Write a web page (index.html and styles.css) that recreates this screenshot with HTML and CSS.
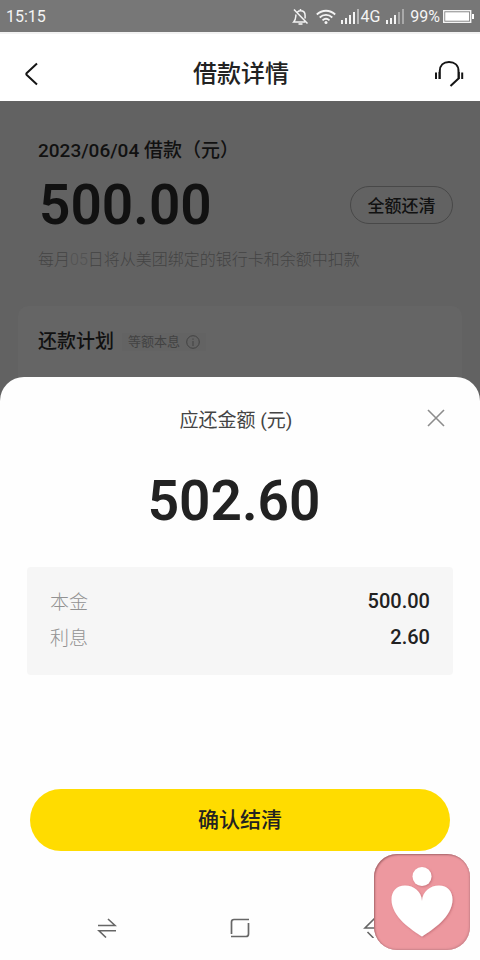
FILE: index.html
```html
<!DOCTYPE html>
<html lang="zh-CN">
<head>
<meta charset="utf-8">
<meta name="viewport" content="width=device-width, initial-scale=1">
<title>借款详情</title>
<link rel="stylesheet" href="styles.css">
</head>
<body>
<div class="status-bar">
  <span>15:15</span>
  <div class="status-icons">
    <svg width="18" height="20" viewBox="0 0 18 20" fill="none" stroke="#f4f4f4" stroke-width="1.5"><path d="M5.500 5C6.300 4.200 7.500 3.800 8.500 3.800c2.800 0 4.600 2 4.600 4.700v3M4 7.500c-.5 2.500.2 5-2.300 7.500h11.500M8.500 2v2M2 2.500l13.500 14"/><path d="M6.500 17h4" stroke-width="1.600"/></svg>
    <svg class="wifi" width="20" height="16" viewBox="0 0 20 16" fill="none" stroke="#f4f4f4" stroke-width="1.800"><path d="M.8 5.500c5.300-5 13.100-5 18.400 0M3.700 8.500c3.700-3.500 8.900-3.500 12.600 0M6.500 11.300c2.100-1.900 4.900-1.900 7 0"/><circle cx="10" cy="13.500" r="1.500" fill="#f4f4f4" stroke="none"/></svg>
    <svg class="signal" width="18" height="16" viewBox="0 0 18 16" fill="#f4f4f4"><path d="M0 11h2v4H0zM4 9h2v6H4zM8 6h2v9H8zM12 3h2v12h-2z"/><path d="M16 0h2v15h-2z" opacity=".5"/></svg>
    <span class="network">4G</span>
    <svg class="signal-second" width="18" height="16" viewBox="0 0 18 16" fill="#f4f4f4"><path d="M0 11h2v4H0zM4 9h2v6H4zM8 6h2v9H8z"/><path d="M12 3h2v12h-2zM16 0h2v15h-2z" opacity=".4"/></svg>
    <span>99%</span>
    <svg class="battery" width="31" height="13" viewBox="0 0 31 13"><rect x=".7" y=".7" width="27" height="11.600" fill="none" stroke="#f4f4f4" stroke-width="1.400"/><path d="M2.200 2.200h24v8.600h-24zM29 4h2v5h-2z" fill="#fff"/></svg>
  </div>
</div>

<header class="title-bar">
  <button class="icon-button" type="button" aria-label="返回"><svg width="14" height="24" viewBox="0 0 14 24" fill="none" stroke="#151515" stroke-width="2"><path d="M13 1.500 2.800 11q-1 1 0 2L13 22.500"/></svg></button>
  <h1>借款详情</h1>
  <button class="icon-button" type="button" aria-label="客服"><svg width="30" height="28" viewBox="0 0 30 28" fill="none" stroke="#151515" stroke-width="2"><path d="M5.800 19V11C5.800 5.500 9.300 2 15 2s9.500 3.500 9.500 9v7.500l-8 7.500M2 12.500V19M28.200 12.500V19"/><path d="M5.300 12v7M25 12v7" stroke-width="1.500"/></svg></button>
</header>

<main>
  <section class="loan">
    <h2>2023/06/04 借款（元）</h2>
    <div class="loan-row">
      <strong class="amount">500.00</strong>
      <button class="payoff" type="button">全额还清</button>
    </div>
    <p>每月<span class="day">05</span>日将从美团绑定的银行卡和余额中扣款</p>
    <div class="plan">
      <h2>还款计划</h2>
      <span class="tag">等额本息
        <svg width="14" height="14" viewBox="0 0 14 14" fill="none" stroke="#424242"><circle cx="7" cy="7" r="6.300"/><path d="M7 6v5M7 3.500v1.300"/></svg>
      </span>
    </div>
  </section>

  <section class="sheet">
    <div class="sheet-head">
      <h2>应还金额 (元)</h2>
      <button class="icon-button" type="button" aria-label="关闭"><svg width="18" height="18" viewBox="0 0 18 18" stroke="#8c8c8c" stroke-width="1.600"><path d="m1 1 16 16M17 1 1 17"/></svg></button>
    </div>
    <strong class="amount due">502.60</strong>
    <dl class="breakdown">
      <div><dt>本金</dt><dd>500.00</dd></div>
      <div><dt>利息</dt><dd>2.60</dd></div>
    </dl>
    <button class="confirm" type="button">确认结清</button>
    <nav class="system-nav">
      <button class="icon-button" type="button" aria-label="切换"><svg width="20" height="20" viewBox="0 0 20 20" fill="none" stroke="#666" stroke-width="1.600"><path d="M1 7.500h17L11 1M19 12.700H2L9 19.500"/></svg></button>
      <button class="icon-button" type="button" aria-label="主页"><svg width="20" height="20" viewBox="0 0 20 20" fill="none" stroke="#666" stroke-width="1.700"><path d="M1.500 16V4q0-2.500 2.500-2.500h15M1 18.500h15q2.500 0 2.500-2.500V5"/></svg></button>
      <button class="icon-button" type="button" aria-label="后退"><svg width="20" height="20" viewBox="0 0 20 20" fill="none" stroke="#666" stroke-width="1.600"><path d="M12 0 2 10h17M4.500 14l6 6"/></svg></button>
    </nav>
  </section>
</main>

<button class="floating" type="button" aria-label="爱心助手">
  <svg width="96" height="96" viewBox="0 0 96 96">
    <defs><filter id="soft" x="-20%" y="-20%" width="140%" height="140%"><feDropShadow dx="1" dy="1" stdDeviation="1.200" flood-color="#a64e58" flood-opacity=".5"/></filter></defs>
    <g fill="#fff" filter="url(#soft)"><circle cx="48" cy="22.500" r="9.500"/><path d="M48 82.500C38 76 17.500 63 17.500 45.500c0-8 5-14 13.500-14 9 0 16.500 6 17 15.500.5-9.500 8-15.500 17-15.500 8.500 0 13.500 6 13.500 14C78.500 63 58 76 48 82.500z"/></g>
  </svg>
</button>
</body>
</html>
```
FILE: styles.css
```css
* { box-sizing: border-box; }

body {
  position: relative;
  display: flex;
  flex-direction: column;
  min-height: 100vh;
  margin: 0;
  background: #fefefe;
  color: #222;
  font-family: Roboto, "Noto Sans CJK SC", sans-serif;
}

h1, h2, p, dl, dd { margin: 0; }
h1, h2 { font-weight: 500; }
svg { display: block; flex: none; }

button {
  padding: 0;
  border: 0;
  background: none;
  color: inherit;
  font: inherit;
}

.icon-button { display: grid; place-items: center; }

.status-bar {
  display: flex;
  align-items: center;
  justify-content: space-between;
  height: 32px;
  padding: 1px 6px 0;
  background: #777;
  color: #f4f4f4;
  font-size: 16px;
}

.status-icons { display: flex; align-items: center; }
.wifi { margin-left: 6px; }
.signal { margin-left: 5px; }
.network { margin-left: 1px; }
.signal-second { margin: 0 6px; }
.battery { margin-left: 3px; }

.title-bar {
  display: flex;
  align-items: center;
  justify-content: space-between;
  height: 69px;
  padding: 12px 16px 0 24px;
  border-top: 2px solid #f2f2f2;
  background: #fff;
}

.title-bar h1 {
  padding-left: 10px;
  font-size: 24px;
  line-height: 32px;
}

main {
  display: flex;
  flex: 1;
  flex-direction: column;
  background: #626262;
}

.loan { padding: 36px 18px 0; color: #111; }

.loan h2 {
  padding-left: 20px;
  font-size: 19px;
  line-height: 28px;
}

.loan-row {
  display: flex;
  align-items: center;
  justify-content: space-between;
  padding: 4px 9px 0 21px;
}

.amount {
  font-size: 55px;
  font-weight: 600;
  line-height: 72px;
}

.payoff {
  width: 103px;
  height: 38px;
  padding-bottom: 2px;
  border: 1px solid #484848;
  border-radius: 19px;
  font-size: 17px;
  font-weight: 500;
}

.loan p {
  padding: 7px 0 0 20px;
  color: #444;
  font-size: 16px;
  font-weight: 300;
  line-height: 24px;
}

.day { color: #525252; }

.plan {
  display: flex;
  align-items: center;
  height: 71px;
  margin-top: 34px;
  border-radius: 10px 10px 0 0;
  background: #656565;
}

.tag {
  display: flex;
  align-items: center;
  gap: 6px;
  margin-left: 8px;
  padding: 0 6px;
  background: #636363;
  color: #424242;
  font-size: 13px;
  line-height: 18px;
}

.sheet {
  display: flex;
  flex: 1;
  flex-direction: column;
  padding: 0 27px;
  border-radius: 24px 24px 0 0;
  background: #fefefe;
}

.sheet-head {
  display: grid;
  grid-template-columns: 1fr auto 1fr;
  align-items: center;
  height: 82px;
  padding: 0 8px 0 0;
}

.sheet-head h2 {
  grid-column: 2;
  color: #444;
  font-size: 19px;
  font-weight: 400;
}

.sheet-head button { justify-self: end; }

.due {
  margin: 6px 12px 0 0;
  text-align: center;
}

.breakdown {
  margin-top: 30px;
  padding: 16px 23px 20px;
  border-radius: 4px;
  background: #f6f6f6;
}

.breakdown div {
  display: flex;
  align-items: center;
  justify-content: space-between;
  height: 36px;
}

.breakdown dt {
  padding-bottom: 2px;
  color: #929292;
  font-size: 19px;
  font-weight: 300;
}

.breakdown dd { font-size: 20px; font-weight: 500; }

.confirm {
  height: 62px;
  margin: 114px 3px 0;
  padding-bottom: 4px;
  border-radius: 31px;
  background: #ffdc00;
  font-size: 21px;
  font-weight: 500;
}

.system-nav {
  display: flex;
  justify-content: space-between;
  margin-top: auto;
  padding: 0 70px 22px;
}

.floating {
  position: absolute;
  right: 10px;
  bottom: 10px;
  border-radius: 23px;
  background: #ed989f;
  box-shadow: inset 1px 1px 2px #a46469, inset -1px -1px 2px #cf878e;
}
```
